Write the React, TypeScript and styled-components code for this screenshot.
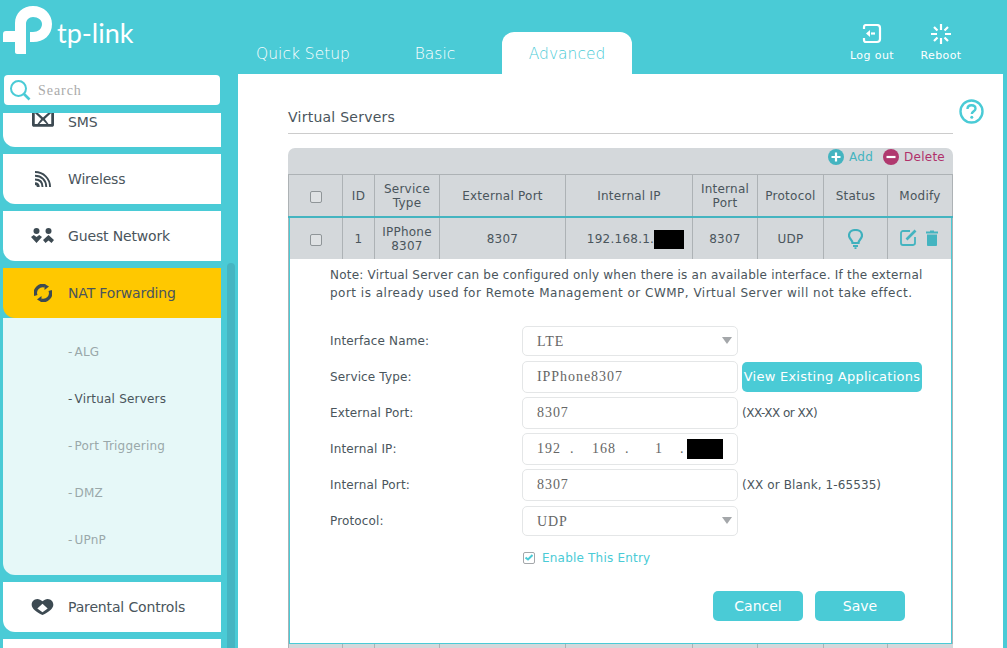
import React from "react";
import styled, { createGlobalStyle } from "styled-components";

const GlobalStyle = createGlobalStyle`
  html, body {
    margin: 0;
    padding: 0;
    height: 100%;
    overflow: hidden;
    background: #4acbd6;
    font-family: "DejaVu Sans", sans-serif;
  }
  * { box-sizing: border-box; }
`;

const teal = "#4acbd6";
const ink = "#4a555c";

const columns = [54, 32, 65, 126, 127, 65, 66, 64, 65];

const LogoIcon = () => (
  <svg width="54" height="56" viewBox="2 5 54 56" fill="#fff">
    <path d="M15 52 V42 H3 V34 C3 32 4 31 6 31 H15 V23 C15 13 23 6 33 6 C44 6 52 14 52 24 C52 35 44 42 33 42 H30 V32 H33 C38 32 42 29 42 24 C42 20 38 17 33 17 C29 17 26 20 26 24 V54 H17 C16 54 15 53 15 52 Z" />
  </svg>
);

const LogoutIcon = () => (
  <svg width="20" height="20" viewBox="0 0 20 20" fill="none" stroke="#fff" strokeWidth="2.2">
    <path d="M2 5 V3 C2 2 3 1 4 1 H15 C17 1 18 2 18 4 V15 C18 17 17 18 15 18 H4 C3 18 2 17 2 16 V14" />
    <path d="M4 9.5 L8 6 V13 Z" fill="#fff" stroke="none" />
    <path d="M9 9.5 H13" />
  </svg>
);

const RebootIcon = () => (
  <svg width="20" height="20" viewBox="0 0 20 20" stroke="#fff" strokeWidth="2.2">
    <path d="M10 0 V6 M10 14 V20 M0 10 H6 M14 10 H20 M3 3 L6.5 6.5 M17 3 L13.5 6.5 M3 17 L6.5 13.5 M17 17 L13.5 13.5" />
  </svg>
);

const SearchIcon = () => (
  <svg width="22" height="22" viewBox="0 0 22 22" fill="none" stroke={teal} strokeWidth="2">
    <circle cx="9.5" cy="9.5" r="7.5" />
    <path d="M15 15 L20.5 20.5" strokeWidth="2.6" />
  </svg>
);

const HelpIcon = () => (
  <svg width="25" height="25" viewBox="0 0 25 25" fill="none" stroke={teal} strokeWidth="2.4">
    <circle cx="12.5" cy="12.5" r="11" />
    <path d="M8.5 10 C8.5 7.5 10.5 6.3 12.5 6.3 C15 6.3 16.5 7.8 16.5 9.7 C16.5 12.2 12.8 12.4 12.8 15" />
    <circle cx="12.8" cy="18.3" r="1.5" fill={teal} stroke="none" />
  </svg>
);

const SmsIcon = () => (
  <svg width="22" height="18" viewBox="0 0 24 19">
    <path d="M2 0 L12 9 L22 0 H24 V17 C24 18 23 19 22 19 H2 C1 19 0 18 0 17 V0 Z M3 4 V16 H6 L10 10.5 Z M21 4 L14 10.5 L18 16 H21 Z M8 16 H16 L12 12 Z" fill="#3d4a52" fillRule="evenodd" />
  </svg>
);

const WirelessIcon = () => (
  <svg width="16" height="16" viewBox="0 0 17 17" fill="none" stroke="#3d4a52" strokeWidth="2">
    <path d="M0 1 C9 1 16 8 16 17" />
    <path d="M0 5 C7 5 12 10 12 17" />
    <path d="M0 9 C5 9 8 12 8 17" />
    <path d="M0 13.500 C2.500 13.500 3.500 15 3.500 17" strokeWidth="3" />
  </svg>
);

const GuestIcon = () => (
  <svg width="23" height="16" viewBox="0 0 23 16" fill="#3d4a52">
    <circle cx="5.500" cy="3" r="3" />
    <circle cx="17.500" cy="3" r="3" />
    <path d="M0 9 L2.800 7 L5.500 9 L8.200 7 L11 9 L5.500 15 Z" />
    <path d="M12 12 L17.500 7 L23 12 L20.500 15 L17.500 12.500 L14.500 15 Z" />
  </svg>
);

const NatIcon = () => (
  <svg width="18" height="18" viewBox="0 0 18 18" fill="none" stroke="#3d4a52" strokeWidth="3.400">
    <path d="M1.900 11.500 A7.300 7.300 0 0 1 11 1.900" />
    <path d="M16.100 6.500 A7.300 7.300 0 0 1 7 16.100" />
    <path d="M10.500 0 L15 2.500 L10.500 6 Z" fill="#3d4a52" stroke="none" />
    <path d="M7.500 12 L3 15.500 L7.500 18 Z" fill="#3d4a52" stroke="none" />
  </svg>
);

const HeartIcon = () => (
  <svg width="23" height="16" viewBox="0 0 23 17">
    <path d="M6 0 C8 0 10 1 11.500 2.500 C13 1 15 0 17 0 C20.500 0 23 3 23 6 C23 10 18 14 11.500 17 C5 14 0 10 0 6 C0 3 2.500 0 6 0 Z M11.500 5 L6 10 L11.500 14 L17 10 Z" fill="#3d4a52" fillRule="evenodd" />
  </svg>
);

const BulbIcon = () => (
  <svg width="15" height="20" viewBox="0 0 15 20" fill="none" stroke="#3fb0bd" strokeWidth="2.200">
    <path d="M4.500 14 C4.500 11 1 10 1 6.500 C1 3 4 1 7.500 1 C11 1 14 3 14 6.500 C14 10 10.500 11 10.500 14 Z" />
    <path d="M5 17 H10 M6.500 19.300 H8.500" />
  </svg>
);

const EditIcon = () => (
  <svg width="17" height="17" viewBox="0 0 17 17" fill="none" stroke="#44b4c0" strokeWidth="1.800">
    <path d="M10 2 H3 C2 2 1 3 1 4 V14 C1 15 2 16 3 16 H13 C14 15.900 15 15 15 14 V8" />
    <path d="M6.500 10.500 L15.500 1.500" strokeWidth="2.600" />
  </svg>
);

const TrashIcon = () => (
  <svg width="12" height="16" viewBox="0 0 12 16" fill="#44b4c0">
    <path d="M0 1.500 H4 V0.500 H8 V1.500 H12 V3.500 H0 Z" />
    <path d="M1 4.500 H11 V15 C11 15.500 10.500 16 10 16 H2 C1.500 16 1 15.500 1 15 Z" />
  </svg>
);

const RoundSign = ({ color, plus }: { color: string; plus?: boolean }) => (
  <svg width="16" height="16" viewBox="0 0 16 16">
    <circle cx="8" cy="8" r="8" fill={color} />
    <path d={plus ? "M8 3.500 V12.500 M3.500 8 H12.500" : "M3.500 8 H12.500"} stroke="#fff" strokeWidth="2.200" />
  </svg>
);

const subItems = ["ALG", "Virtual Servers", "Port Triggering", "DMZ", "UPnP"];

const App = () => {
  return (
    <Page>
      <GlobalStyle />
      <Header>
        <Logo>
          <LogoIcon />
          <LogoText>tp-link</LogoText>
        </Logo>
        <Tabs>
          <Tab>Quick Setup</Tab>
          <Tab>Basic</Tab>
          <Tab $active>Advanced</Tab>
        </Tabs>
        <HeadActions>
          <HeadAction>
            <LogoutIcon />
            <span>Log out</span>
          </HeadAction>
          <HeadAction>
            <RebootIcon />
            <span>Reboot</span>
          </HeadAction>
        </HeadActions>
      </Header>
      <Body>
        <Sidebar>
          <SearchBox>
            <SearchIcon />
            <SearchText>Search</SearchText>
          </SearchBox>
          <MenuScroll>
            <MenuList>
              <MenuItem>
                <MenuIcon $up={8}><SmsIcon /></MenuIcon>SMS
              </MenuItem>
              <MenuItem>
                <MenuIcon><WirelessIcon /></MenuIcon>Wireless
              </MenuItem>
              <MenuItem>
                <MenuIcon><GuestIcon /></MenuIcon>Guest Network
              </MenuItem>
              <MenuGroup>
                <MenuItem $active>
                  <MenuIcon><NatIcon /></MenuIcon>NAT Forwarding
                </MenuItem>
                <SubMenu>
                  {subItems.map((name) => (
                    <SubItem key={name} $active={name === "Virtual Servers"}>
                      <SubDash>-</SubDash>
                      {name}
                    </SubItem>
                  ))}
                </SubMenu>
              </MenuGroup>
              <MenuItem>
                <MenuIcon><HeartIcon /></MenuIcon>Parental Controls
              </MenuItem>
              <MenuItem />
            </MenuList>
            <ScrollThumb />
          </MenuScroll>
        </Sidebar>
        <Content>
          <HelpButton><HelpIcon /></HelpButton>
          <Title>Virtual Servers</Title>
          <TableWrap>
            <Toolbar>
              <ToolLink $color="#44b4c0">
                <RoundSign color="#44b4c0" plus />Add
              </ToolLink>
              <ToolLink $color="#b0306a">
                <RoundSign color="#b0386e" />Delete
              </ToolLink>
            </Toolbar>
            <Table>
              <colgroup>
                {columns.map((w, i) => (
                  <col key={i} style={{ width: w }} />
                ))}
              </colgroup>
              <thead>
                <tr>
                  <HeadCell><Check /></HeadCell>
                  <HeadCell>ID</HeadCell>
                  <HeadCell>Service Type</HeadCell>
                  <HeadCell>External Port</HeadCell>
                  <HeadCell>Internal IP</HeadCell>
                  <HeadCell>Internal Port</HeadCell>
                  <HeadCell>Protocol</HeadCell>
                  <HeadCell>Status</HeadCell>
                  <HeadCell>Modify</HeadCell>
                </tr>
              </thead>
              <tbody>
                <tr>
                  <Cell><Check /></Cell>
                  <Cell>1</Cell>
                  <Cell>IPPhone 8307</Cell>
                  <Cell>8307</Cell>
                  <IpCell>192.168.1.<Redact $w={30} $h={19} /></IpCell>
                  <Cell>8307</Cell>
                  <Cell>UDP</Cell>
                  <Cell><BulbIcon /></Cell>
                  <Cell>
                    <ModifyIcons>
                      <EditIcon />
                      <TrashIcon />
                    </ModifyIcons>
                  </Cell>
                </tr>
                <tr>
                  <EditorCell colSpan={9}>
                    <Note>
                      <NoteLine $spacing={0.22}>
                        Note: Virtual Server can be configured only when there is an available interface. If the external
                      </NoteLine>
                      <NoteLine $spacing={0.49}>
                        port is already used for Remote Management or CWMP, Virtual Server will not take effect.
                      </NoteLine>
                    </Note>
                    <Form>
                      <FormRow>
                        <FieldLabel>Interface Name:</FieldLabel>
                        <SelectBox>LTE</SelectBox>
                      </FormRow>
                      <FormRow>
                        <FieldLabel>Service Type:</FieldLabel>
                        <InputBox>IPPhone8307</InputBox>
                        <ViewButton>View Existing Applications</ViewButton>
                      </FormRow>
                      <FormRow>
                        <FieldLabel>External Port:</FieldLabel>
                        <InputBox>8307</InputBox>
                        <Hint $spacing={-0.5}>(XX-XX or XX)</Hint>
                      </FormRow>
                      <FormRow>
                        <FieldLabel>Internal IP:</FieldLabel>
                        <IpBox>
                          <Octet>192</Octet>
                          <Dot>.</Dot>
                          <Octet>168</Octet>
                          <Dot>.</Dot>
                          <Octet>1</Octet>
                          <Dot>.</Dot>
                          <Redact $w={36} $h={20} />
                        </IpBox>
                      </FormRow>
                      <FormRow>
                        <FieldLabel>Internal Port:</FieldLabel>
                        <InputBox>8307</InputBox>
                        <Hint $spacing={0.1}>(XX or Blank, 1-65535)</Hint>
                      </FormRow>
                      <FormRow>
                        <FieldLabel>Protocol:</FieldLabel>
                        <SelectBox>UDP</SelectBox>
                      </FormRow>
                    </Form>
                    <EnableRow>
                      <EnableBox>
                        <svg width="8" height="7" viewBox="0 0 8 7" fill="none" stroke={teal} strokeWidth="2">
                          <path d="M0.500 3.500 L3 5.500 L7.500 1" />
                        </svg>
                      </EnableBox>
                      Enable This Entry
                    </EnableRow>
                    <Actions>
                      <ActionButton>Cancel</ActionButton>
                      <ActionButton>Save</ActionButton>
                    </Actions>
                  </EditorCell>
                </tr>
                <tr>
                  <TailCell /><TailCell /><TailCell /><TailCell /><TailCell /><TailCell /><TailCell /><TailCell /><TailCell />
                </tr>
              </tbody>
            </Table>
          </TableWrap>
        </Content>
      </Body>
    </Page>
  );
};

const Page = styled.div`
  width: 1007px;
  height: 648px;
  overflow: hidden;
  background: ${teal};
  display: flex;
  flex-direction: column;
`;

const Header = styled.div`
  height: 74px;
  flex: none;
  display: flex;
  align-items: flex-end;
  color: #fff;
`;

const Logo = styled.div`
  width: 226px;
  height: 74px;
  padding: 5px 0 0 2px;
  display: flex;
  align-items: flex-start;
`;

const LogoText = styled.span`
  font-family: Lato, sans-serif;
  font-size: 27px;
  font-weight: 400;
  line-height: 27px;
  margin: 14px 0 0 1px;
`;

const Tabs = styled.div`
  display: flex;
  align-items: flex-end;
  gap: 2px;
  width: 590px;
  padding-left: 12px;
`;

const Tab = styled.div<{ $active?: boolean }>`
  width: 130px;
  height: 42px;
  padding-top: 1px;
  font-size: 15.5px;
  font-weight: 300;
  display: flex;
  align-items: center;
  justify-content: center;
  border-radius: 12px 12px 0 0;
  color: ${(p) => (p.$active ? teal : "#fff")};
  background: ${(p) => (p.$active ? "#fff" : "transparent")};
`;

const HeadActions = styled.div`
  display: flex;
  gap: 21px;
  padding: 0 0 12px 32px;
`;

const HeadAction = styled.div`
  width: 48px;
  display: flex;
  flex-direction: column;
  align-items: center;
  gap: 5px;
  font-size: 11px;
  line-height: 13px;
  letter-spacing: 0.4px;
  white-space: nowrap;
`;

const Body = styled.div`
  flex: 1;
  display: flex;
  min-height: 0;
`;

const Sidebar = styled.div`
  width: 238px;
  flex: none;
  display: flex;
  flex-direction: column;
  padding-top: 1px;
`;

const SearchBox = styled.div`
  width: 216px;
  height: 30px;
  flex: none;
  margin: 0 0 8px 4px;
  background: #fff;
  border-radius: 4px;
  display: flex;
  align-items: center;
  gap: 7px;
  padding-left: 5px;
  font-family: "Liberation Serif", serif;
  font-size: 14px;
  letter-spacing: 0.95px;
  color: #aaa;
`;

const SearchText = styled.span`
  padding-top: 1px;
`;

const MenuScroll = styled.div`
  flex: 1;
  min-height: 0;
  overflow: hidden;
  position: relative;
`;

const MenuList = styled.div`
  width: 218px;
  margin: -16px 0 0 3px;
  display: flex;
  flex-direction: column;
  gap: 7px;
`;

const MenuGroup = styled.div`
  display: flex;
  flex-direction: column;
`;

const MenuItem = styled.div<{ $active?: boolean }>`
  height: 50px;
  flex: none;
  display: flex;
  align-items: center;
  font-size: 14px;
  letter-spacing: -0.15px;
  color: ${ink};
  background: ${(p) => (p.$active ? "#ffc800" : "#fff")};
  border-radius: 0 0 0 12px;
`;

const MenuIcon = styled.span<{ $up?: number }>`
  width: 65px;
  padding: 0 13px 0 27px;
  margin-bottom: ${(p) => p.$up ?? 0}px;
  display: flex;
  justify-content: center;
`;

const SubMenu = styled.div`
  height: 257px;
  background: #e6f8f8;
  border-radius: 0 0 0 12px;
  padding-top: 10px;
  display: flex;
  flex-direction: column;
`;

const SubItem = styled.div<{ $active?: boolean }>`
  height: 47px;
  padding-left: 65px;
  display: flex;
  align-items: center;
  font-size: 12px;
  letter-spacing: 0.2px;
  color: ${(p) => (p.$active ? ink : "#9aa8aa")};
`;

const SubDash = styled.span`
  margin-right: 2px;
`;

const ScrollThumb = styled.div`
  position: absolute;
  left: 227px;
  top: 150px;
  bottom: 0;
  width: 8px;
  background: #45b5c2;
  border-radius: 4px 4px 0 0;
`;

const Content = styled.div`
  width: 765px;
  flex: none;
  position: relative;
  background: #fff;
  padding: 26px 50px 0;
  overflow: hidden;
`;

const HelpButton = styled.div`
  position: absolute;
  top: 25px;
  right: 19px;
  line-height: 0;
`;

const Title = styled.div`
  height: 34px;
  font-size: 14px;
  letter-spacing: 0.25px;
  line-height: 34px;
  color: ${ink};
  border-bottom: 1px solid #ccc;
  margin-bottom: 14px;
`;

const TableWrap = styled.div`
  width: 665px;
  background: #d4d8db;
  border-radius: 7px 7px 0 0;
`;

const Toolbar = styled.div`
  height: 26px;
  display: flex;
  justify-content: flex-end;
  align-items: center;
  gap: 10px;
  padding: 0 8px 9px 0;
`;

const ToolLink = styled.span<{ $color: string }>`
  display: flex;
  align-items: center;
  gap: 5px;
  font-size: 12px;
  letter-spacing: 0.25px;
  color: ${(p) => p.$color};
`;

const Table = styled.table`
  width: 664px;
  table-layout: fixed;
  border-collapse: collapse;
  font-size: 12px;
  letter-spacing: 0.25px;
  color: ${ink};
`;

const HeadCell = styled.th`
  height: 42px;
  padding: 2px 3px 0;
  font-weight: 400;
  line-height: 14px;
  text-align: center;
  border: 1px solid #adb2b5;
  border-bottom: 2px solid #44b4c0;
`;

const Cell = styled.td`
  height: 42px;
  padding: 2px 3px 0;
  line-height: 14px;
  text-align: center;
  border-left: 1px solid #adb2b5;
  border-right: 1px solid #adb2b5;
  &:first-child { box-shadow: inset 1px 0 0 ${teal}; }
  &:last-child { box-shadow: inset -1px 0 0 ${teal}; }
  svg { vertical-align: middle; }
`;

const IpCell = styled(Cell)`
  padding-left: 16px;
  white-space: nowrap;
`;

const TailCell = styled.td`
  height: 8px;
  border-left: 1px solid #adb2b5;
  border-top: 1px solid ${teal};
`;

const Check = styled.span`
  display: inline-block;
  width: 12px;
  height: 12px;
  vertical-align: middle;
  border: 1px solid #8f9598;
  border-radius: 2px;
  background: #dfe2e4;
`;

const Redact = styled.span<{ $w: number; $h: number }>`
  display: inline-block;
  flex: none;
  vertical-align: middle;
  width: ${(p) => p.$w}px;
  height: ${(p) => p.$h}px;
  background: #000;
`;

const ModifyIcons = styled.span`
  display: inline-flex;
  align-items: center;
  gap: 9px;
  margin-left: -2px;
`;

const EditorCell = styled.td`
  background: #fff;
  padding: 7px 20px 0 41px;
  height: 385px;
  vertical-align: top;
  border-left: 1px solid #adb2b5;
  border-right: 1px solid #adb2b5;
  box-shadow: inset 1px 0 0 ${teal}, inset -1px 0 0 ${teal};
`;

const Note = styled.div`
  line-height: 18px;
  font-size: 12px;
  margin-bottom: 23px;
`;

const NoteLine = styled.div<{ $spacing: number }>`
  white-space: nowrap;
  letter-spacing: ${(p) => p.$spacing}px;
`;

const Form = styled.div`
  display: flex;
  flex-direction: column;
  gap: 4px;
`;

const FormRow = styled.div`
  height: 32px;
  display: flex;
  align-items: center;
  gap: 4px;
`;

const FieldLabel = styled.label`
  width: 188px;
  flex: none;
  font-size: 12px;
  letter-spacing: 0.15px;
`;

const InputBox = styled.div`
  width: 216px;
  height: 32px;
  flex: none;
  display: flex;
  align-items: center;
  padding-left: 14px;
  border: 1px solid #e4e6e7;
  border-radius: 5px;
  font-family: "Liberation Serif", serif;
  font-size: 14px;
  letter-spacing: 0.95px;
  color: #666;
`;

const IpBox = styled(InputBox)`
  padding-left: 13px;
`;

const SelectBox = styled(InputBox)`
  height: 30px;
  padding-top: 2px;
  position: relative;
  &::after {
    content: "";
    position: absolute;
    right: 5px;
    top: 10px;
    border-left: 5px solid transparent;
    border-right: 5px solid transparent;
    border-top: 7px solid #a4a7aa;
  }
`;

const Octet = styled.span`
  width: 26px;
  text-align: center;
  &:not(:first-child) { margin-left: 14px; }
`;

const Dot = styled.span`
  width: 15px;
  padding-left: 8px;
`;

const ViewButton = styled.button`
  width: 180px;
  height: 30px;
  padding: 0;
  border: 0;
  border-radius: 5px;
  background: ${teal};
  color: #fff;
  font-family: inherit;
  font-size: 13px;
  letter-spacing: 0.25px;
  white-space: nowrap;
`;

const Hint = styled.span<{ $spacing: number }>`
  font-size: 12px;
  letter-spacing: ${(p) => p.$spacing}px;
`;

const EnableRow = styled.div`
  display: flex;
  align-items: center;
  gap: 7px;
  margin: 14px 0 0 193px;
  font-size: 12px;
  letter-spacing: 0.2px;
  color: ${teal};
`;

const EnableBox = styled.span`
  width: 12px;
  height: 12px;
  border: 1px solid #a4a7aa;
  border-radius: 2px;
  display: flex;
  align-items: center;
  justify-content: center;
`;

const Actions = styled.div`
  display: flex;
  justify-content: flex-end;
  gap: 12px;
  margin-top: 26px;
  padding-right: 27px;
`;

const ActionButton = styled.button`
  width: 90px;
  height: 30px;
  padding: 0;
  border: 0;
  border-radius: 5px;
  background: ${teal};
  color: #fff;
  font-family: inherit;
  font-size: 14px;
`;

export default App;
